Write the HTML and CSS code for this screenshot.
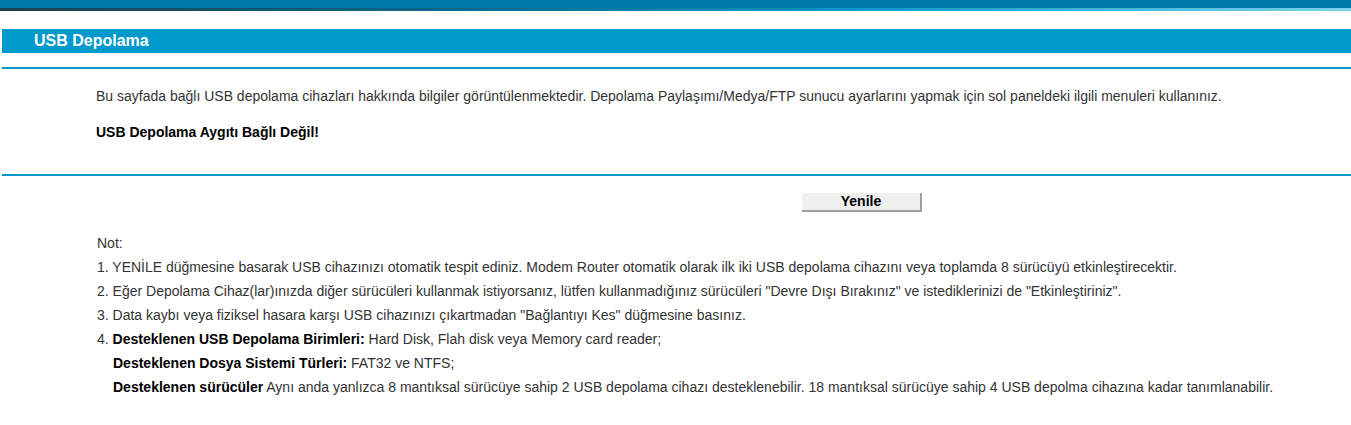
FILE: index.html
```html
<!DOCTYPE html>
<html lang="tr">
<head>
<meta charset="utf-8">
<title>USB Depolama</title>
<link rel="stylesheet" href="styles.css">
</head>
<body>
<div class="topbar"></div>
<div class="topline"></div>
<div class="title">USB Depolama</div>
<div class="rule"></div>
<div class="intro">
  <p class="desc">Bu sayfada bağlı USB depolama cihazları hakkında bilgiler görüntülenmektedir. Depolama Paylaşımı/Medya/FTP sunucu ayarlarını yapmak için sol paneldeki ilgili menuleri kullanınız.</p>
  <p class="status">USB Depolama Aygıtı Bağlı Değil!</p>
</div>
<div class="rule rule2"></div>
<div class="actions">
  <button class="btn" type="button">Yenile</button>
</div>
<div class="notes">
  <div class="line">Not:</div>
  <div class="line">1. YENİLE düğmesine basarak USB cihazınızı otomatik tespit ediniz. Modem Router otomatik olarak ilk iki USB depolama cihazını veya toplamda 8 sürücüyü etkinleştirecektir.</div>
  <div class="line">2. Eğer Depolama Cihaz(lar)ınızda diğer sürücüleri kullanmak istiyorsanız, lütfen kullanmadığınız sürücüleri "Devre Dışı Bırakınız" ve istediklerinizi de "Etkinleştiriniz".</div>
  <div class="line">3. Data kaybı veya fiziksel hasara karşı USB cihazınızı çıkartmadan "Bağlantıyı Kes" düğmesine basınız.</div>
  <div class="line">4. <b>Desteklenen USB Depolama Birimleri:</b> Hard Disk, Flah disk veya Memory card reader;</div>
  <div class="line indent"><b>Desteklenen Dosya Sistemi Türleri:</b> FAT32 ve NTFS;</div>
  <div class="line indent"><b>Desteklenen sürücüler</b> Aynı anda yanlızca 8 mantıksal sürücüye sahip 2 USB depolama cihazı desteklenebilir. 18 mantıksal sürücüye sahip 4 USB depolma cihazına kadar tanımlanabilir.</div>
</div>
</body>
</html>
```

FILE: styles.css
```css
html, body {
  margin: 0;
  padding: 0;
  background: #ffffff;
}
body {
  font-family: "Liberation Sans", Arial, sans-serif;
  font-size: 14px;
  color: #333333;
}
.topbar {
  height: 8px;
  background: #0078ab;
}
.topline {
  height: 3px;
  background: linear-gradient(to right, #1c3f4e 0%, #0a6a8f 35%, #0a9ecb 65%, #7ad2ea 100%);
}
.title {
  margin: 18px 0 0 2px;
  height: 24px;
  line-height: 24px;
  padding-left: 32px;
  background: #0099cc;
  color: #ffffff;
  font-weight: bold;
  font-size: 16px;
}
.rule {
  margin: 14px 0 0 2px;
  height: 2px;
  background: #0099cc;
}
.intro {
  padding: 19px 0 0 96px;
  height: 86px;
}
.intro p {
  margin: 0;
  line-height: 16px;
}
.desc {
  color: #333333;
}
.status {
  margin-top: 20px !important;
  font-weight: bold;
  color: #000000;
}
.rule2 {
  margin-top: 0;
}
.actions {
  padding: 17px 0 0 802px;
  height: 19px;
}
.btn {
  display: block;
  width: 120px;
  height: 19px;
  margin: 0;
  padding: 0;
  background: #efefef;
  border: none;
  border-right: 2px solid #a0a0a0;
  border-bottom: 2px solid #a0a0a0;
  font-family: "Liberation Sans", Arial, sans-serif;
  font-size: 14px;
  font-weight: bold;
  color: #000000;
  line-height: 17px;
}
.notes {
  padding: 19px 0 0 97px;
}
.line {
  line-height: 24px;
}
.line b {
  color: #000000;
}
.indent {
  padding-left: 16px;
}
```
